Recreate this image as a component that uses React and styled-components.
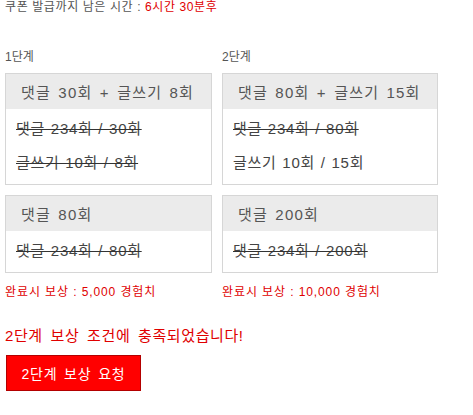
import React from 'react';
import styled, { createGlobalStyle } from 'styled-components';

const GlobalStyle = createGlobalStyle`
    body {
        margin: 0;
        background: #fff;
        font-family: "Liberation Sans", "Noto Sans CJK KR", sans-serif;
        color: #444;
    }
`;

const Page = styled.div`
    padding: 0 5px;
`;

const Timer = styled.div`
    font-size: 12px;
    line-height: 14px;
    letter-spacing: 0.6px;
    color: #555;
    white-space: nowrap;
`;

const Red = styled.span`
    color: #e00000;
`;

const Stages = styled.div`
    display: grid;
    grid-template-columns: 207px 216px;
    column-gap: 10px;
    margin-top: 36px;
`;

const Column = styled.div`
    display: flex;
    flex-direction: column;
`;

const StageLabel = styled.div`
    font-size: 12px;
    line-height: 14px;
    color: #555;
    margin-bottom: 9px;
`;

const Mission = styled.div`
    border: 1px solid #d6d6d6;
    background: #fff;
    margin-bottom: ${props => props.$last ? '0' : '10px'};
`;

const MissionTitle = styled.div`
    height: 35px;
    display: flex;
    align-items: center;
    padding-left: 15px;
    background: #ebebeb;
    font-size: 15px;
    letter-spacing: 1.2px;
    word-spacing: 2px;
    color: #555;
    white-space: nowrap;
`;

const MissionBody = styled.div`
    padding: 3px 0 4px 10px;
`;

const Progress = styled.div`
    height: 34px;
    line-height: 34px;
    font-size: 15px;
    letter-spacing: 0.7px;
    word-spacing: 1px;
    color: #444;
    white-space: nowrap;
    text-decoration: ${props => props.$done ? 'line-through' : 'none'};
    text-decoration-color: #333;
`;

const Reward = styled.div`
    margin-top: 12px;
    font-size: 12px;
    line-height: 14px;
    letter-spacing: 0.9px;
    color: #e00000;
    white-space: nowrap;
`;

const Notice = styled.div`
    margin-top: 28px;
    font-size: 15px;
    line-height: 18px;
    letter-spacing: 0.6px;
    word-spacing: 3px;
    color: #e00000;
    white-space: nowrap;
`;

const RequestButton = styled.button`
    margin-top: 10px;
    margin-left: 1px;
    width: 135px;
    height: 36px;
    border: 1px solid #b30000;
    background: #ff0000;
    color: #fff;
    font-family: "Liberation Sans", "Noto Sans CJK KR", sans-serif;
    font-size: 14px;
    letter-spacing: 0.8px;
    word-spacing: 2px;
    padding: 0;
    cursor: pointer;
`;

const stages = [
    {
        label: '1단계',
        reward: '완료시 보상 : 5,000 경험치',
        missions: [
            {
                title: '댓글 30회 + 글쓰기 8회',
                rows: [
                    { text: '댓글 234회 / 30회', done: true },
                    { text: '글쓰기 10회 / 8회', done: true },
                ],
            },
            {
                title: '댓글 80회',
                rows: [{ text: '댓글 234회 / 80회', done: true }],
            },
        ],
    },
    {
        label: '2단계',
        reward: '완료시 보상 : 10,000 경험치',
        missions: [
            {
                title: '댓글 80회 + 글쓰기 15회',
                rows: [
                    { text: '댓글 234회 / 80회', done: true },
                    { text: '글쓰기 10회 / 15회', done: false },
                ],
            },
            {
                title: '댓글 200회',
                rows: [{ text: '댓글 234회 / 200회', done: true }],
            },
        ],
    },
];

function App() {
    return (
        <Page>
            <GlobalStyle />
            <Timer>
                쿠폰 발급까지 남은 시간 : <Red>6시간 30분후</Red>
            </Timer>
            <Stages>
                {stages.map(stage => (
                    <Column key={stage.label}>
                        <StageLabel>{stage.label}</StageLabel>
                        {stage.missions.map((m, i) => (
                            <Mission key={m.title} $last={i === stage.missions.length - 1}>
                                <MissionTitle>{m.title}</MissionTitle>
                                <MissionBody>
                                    {m.rows.map(r => (
                                        <Progress key={r.text} $done={r.done}>{r.text}</Progress>
                                    ))}
                                </MissionBody>
                            </Mission>
                        ))}
                        <Reward>{stage.reward}</Reward>
                    </Column>
                ))}
            </Stages>
            <Notice>2단계 보상 조건에 충족되었습니다!</Notice>
            <RequestButton>2단계 보상 요청</RequestButton>
        </Page>
    );
}

export default App;
